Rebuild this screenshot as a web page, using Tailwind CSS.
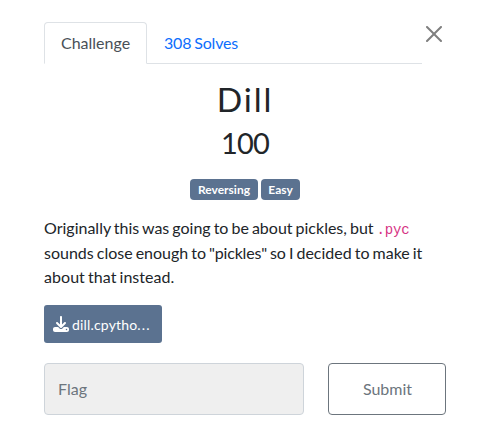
<!DOCTYPE html>
<html lang="en">
<head>
<meta charset="utf-8">
<title>Dill</title>
<script src="https://cdn.jsdelivr.net/npm/@tailwindcss/browser@4"></script>
</head>
<body class="bg-white font-[Lato,sans-serif] text-base text-[#212529]">
<main class="relative w-[490px] h-[433px] overflow-hidden pl-[44px] pt-[22px]">
  <button class="absolute left-[426px] top-[26px] size-4 text-[#7f7f7f]" aria-label="Close">
    <svg viewBox="0 0 16 16" class="size-4" fill="currentColor"><path d="M.293.293a1 1 0 0 1 1.414 0L8 6.586 14.293.293a1 1 0 1 1 1.414 1.414L9.414 8l6.293 6.293a1 1 0 0 1-1.414 1.414L8 9.414l-6.293 6.293a1 1 0 0 1-1.414-1.414L6.586 8 .293 1.707a1 1 0 0 1 0-1.414z"/></svg>
  </button>
  <nav class="flex w-[378px] h-[42px] border-b border-[#dee2e6] leading-6">
    <a class="h-[42px] w-[103px] border border-b-white border-[#dee2e6] rounded-t-[4px] bg-white px-4 py-2 text-[#495057]">Challenge</a>
    <a class="px-[17px] py-[9px] text-[#0d6efd] tracking-[-0.17px] [word-spacing:-1px]">308 Solves</a>
  </nav>
  <div class="w-[402px]">
    <h2 class="mt-[15px] h-[41px] text-center text-[33.5px] leading-[41px] tracking-[1.9px]">Dill</h2>
    <h3 class="mt-[5px] h-[36px] text-center text-[29px] leading-[35px] tracking-[-0.8px]">100</h3>
    <div class="mt-[18px] flex justify-center gap-[3px] text-xs leading-3 font-bold text-white">
      <span class="h-[21px] w-[68px] rounded-[4px] bg-[#5b7290] pt-[5px] text-center">Reversing</span>
      <span class="h-[21px] w-[39px] rounded-[4px] bg-[#5b7290] pt-[5px] text-center">Easy</span>
    </div>
    <p class="mt-4 w-[380px] leading-[24.5px] whitespace-nowrap [word-spacing:-1.07px]">Originally this was going to be about pickles, but <code class="font-['Liberation_Mono',monospace] text-[14px] leading-none tracking-[-0.2px] text-[#d63384]">.pyc</code><br>sounds close enough to <span class="tracking-[-0.2px]">"pickles"</span> so I decided to make it<br><span class="tracking-[0.05px]">about that instead.</span></p>
    <a class="mt-[15px] flex h-[38px] w-[118px] items-center rounded-[3px] bg-[#5b7290] pl-[9px] pt-px text-sm text-white">
      <svg viewBox="0 0 512 512" class="mr-[3px] size-4" fill="currentColor"><path d="M288 32c0-17.700-14.300-32-32-32s-32 14.300-32 32v242.700l-73.400-73.400c-12.500-12.500-32.800-12.500-45.300 0s-12.500 32.800 0 45.300l128 128c12.500 12.500 32.800 12.500 45.300 0l128-128c12.500-12.500 12.500-32.800 0-45.300s-32.800-12.500-45.300 0L288 274.700V32zM64 352c-35.300 0-64 28.700-64 64v32c0 35.300 28.700 64 64 64h384c35.300 0 64-28.700 64-64v-32c0-35.300-28.700-64-64-64H346.500l-45.300 45.300c-25 25-65.500 25-90.500 0L165.500 352H64zm368 56a24 24 0 1 1 0 48 24 24 0 1 1 0-48z"/></svg>
      <span class="pt-px tracking-[0.17px]">dill.cpytho<span class="tracking-[1.1px]">...</span></span>
    </a>
    <div class="mt-5 flex h-[52px] gap-6">
      <input type="text" placeholder="Flag" aria-label="Flag" class="w-[260px] rounded-[4px] border border-[#ced4da] bg-[#efefef] px-[13px] placeholder:text-[#6c757d]">
      <button class="w-[118px] rounded-[4px] border border-[#6c757d] pl-px text-[#6c757d]">Submit</button>
    </div>
  </div>
</main>
</body>
</html>
